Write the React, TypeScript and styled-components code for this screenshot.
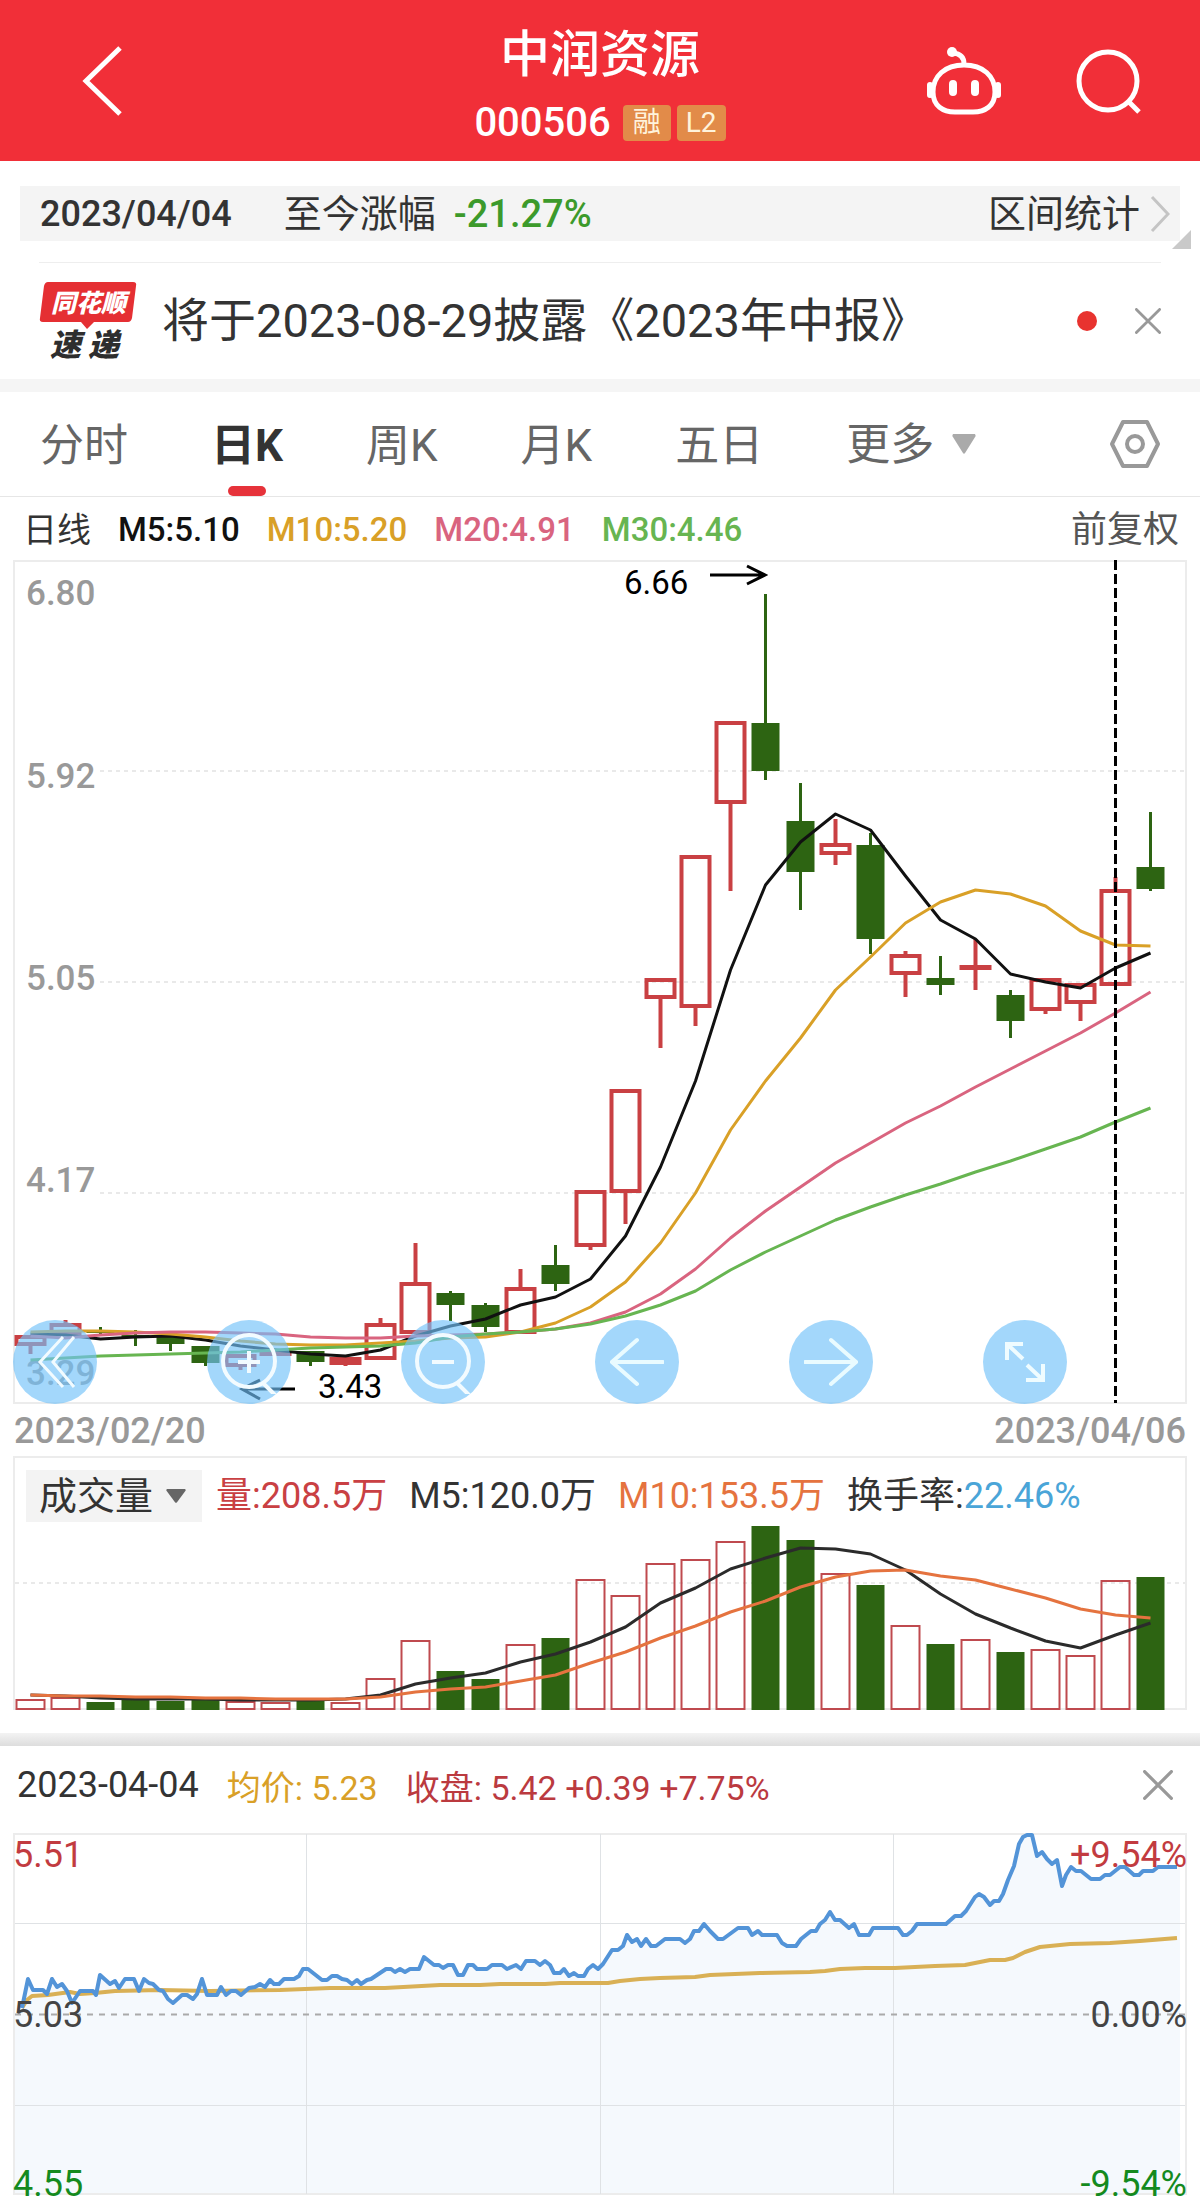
import React from "react";
import styled, { createGlobalStyle } from "styled-components";

const color = {
  brand: "#f12f38",
  ink: "#333333",
  muted: "#999999",
  rise: "#c94043",
  fall: "#2d6412",
  gold: "#d9a027",
  pink: "#d9647f",
  green: "#67b551",
  orange: "#e5733f",
  blue: "#4aa5d8",
  frame: "#ececec",
};

const fonts = `Roboto, "Noto Sans CJK SC", sans-serif`;

const GlobalStyle = createGlobalStyle`
  *, *::before, *::after { box-sizing: border-box; }
  body { margin: 0; background: #fff; color: ${color.ink}; font-family: ${fonts}; }
  button, select { font: inherit; color: inherit; border: 0; padding: 0; margin: 0; background: none; }
  h1, p { margin: 0; font-weight: inherit; }
  svg { display: block; flex: none; }
`;

const Page = styled.div`
  display: flex;
  flex-direction: column;
  padding-bottom: 3px;
`;

/* ---------- header ---------- */

const Header = styled.header`
  display: grid;
  grid-template-columns: 1fr auto 1fr;
  align-items: center;
  height: 161px;
  padding: 0 56px;
  background: ${color.brand};
  color: #fff;
`;

const HeaderTitle = styled.div`
  display: flex;
  flex-direction: column;
  align-items: center;
  gap: 8px;
  padding: 16px 0 0;
`;

const StockName = styled.h1`
  font-size: 50px;
  line-height: 60px;
  font-weight: 500;
`;

const CodeRow = styled.div`
  display: flex;
  align-items: center;
  gap: 6px;
  font-size: 40px;
  line-height: 60px;
  font-weight: 500;
`;

const Code = styled.span`
  margin-right: 6px;
`;

const Badge = styled.span`
  min-width: 48px;
  height: 36px;
  padding: 0 9px;
  border-radius: 4px;
  background: #e28b49;
  color: #fff3dc;
  font-size: 28px;
  line-height: 36px;
  font-weight: 400;
  text-align: center;
`;

const IconButton = styled.button`
  display: flex;
  align-items: center;
  justify-content: center;
  cursor: pointer;
`;

const BackButton = styled(IconButton)`
  justify-self: start;
  padding-left: 24px;
`;

const HeaderActions = styled.div`
  display: flex;
  justify-content: flex-end;
  align-items: center;
  gap: 70px;
`;

/* ---------- range bar and notice ---------- */

const RangeBar = styled.div`
  position: relative;
  display: flex;
  align-items: center;
  height: 55px;
  margin: 25px 20px 0;
  padding: 0 10px 0 20px;
  background: #f4f4f4;
  font-size: 38px;
  line-height: 50px;
`;

const RangeDate = styled.time`
  font-size: 36px;
  font-weight: 500;
  margin-right: 52px;
`;

const RangeValue = styled.span`
  margin-left: 18px;
  color: #3c9a2b;
  font-weight: 500;
`;

const RangeLink = styled.a`
  display: flex;
  align-items: center;
  gap: 10px;
  margin-left: auto;
  color: inherit;
  text-decoration: none;
`;

const Corner = styled.span`
  position: absolute;
  right: -11px;
  bottom: -8px;
  border-left: 19px solid transparent;
  border-bottom: 19px solid #c9c9c9;
`;

const Notice = styled.section`
  display: flex;
  align-items: center;
  height: 117px;
  margin: 21px 39px 0;
  border-top: 1px solid #eeeeee;
`;

const NoticeText = styled.p`
  flex: 1;
  margin-left: 25px;
  font-size: 47px;
  line-height: 60px;
`;

const UnreadDot = styled.span`
  width: 20px;
  height: 20px;
  margin-right: 38px;
  border-radius: 50%;
  background: #e8332f;
`;

const Band = styled.div`
  height: 13px;
  background: #f5f5f5;
`;

/* ---------- period tabs ---------- */

const Tabs = styled.nav`
  display: flex;
  align-items: stretch;
  justify-content: space-between;
  height: 105px;
  padding: 0 39px 0 40px;
  border-bottom: 1px solid #e6e6e6;
  color: #666;
  font-size: 44px;
`;

const TabList = styled.div`
  display: flex;
  align-items: stretch;
  gap: 83px;
`;

const Tab = styled.button<{ $active?: boolean }>`
  display: flex;
  align-items: center;
  justify-content: center;
  position: relative;
  padding-bottom: 4px;
  white-space: nowrap;
  font-weight: ${(p) => (p.$active ? 700 : 400)};
  color: ${(p) => (p.$active ? color.ink : "inherit")};
  cursor: pointer;

  &::after {
    content: "";
    display: ${(p) => (p.$active ? "block" : "none")};
    position: absolute;
    bottom: 0;
    width: 38px;
    height: 10px;
    border-radius: 5px;
    background: #e6323a;
  }
`;

const Picker = styled.label<{ $gap: number }>`
  display: flex;
  align-items: center;
  gap: ${(p) => p.$gap}px;
`;

const PickerSelect = styled.select`
  appearance: none;
  outline: none;
  cursor: pointer;
`;

const PeriodSelect = styled(PickerSelect)`
  padding-top: 2px;
`;

const Spacer = styled.span`
  flex: 1;
`;

/* ---------- charts ---------- */

const Legend = styled.div`
  display: flex;
  align-items: center;
  gap: 27px;
  height: 63px;
  padding: 2px 21px 0 23px;
  font-size: 34px;
  line-height: 48px;
`;

const Value = styled.span<{ $color: string }>`
  color: ${(p) => p.$color};
  font-weight: 500;
  font-size: 33px;
`;

const Adjust = styled.button`
  margin-left: auto;
  color: #555;
  font-size: 36px;
`;

const Plot = styled.div`
  position: relative;
  margin: 0 13px;
`;

const Drawing = styled.svg`
  width: 100%;
  height: auto;
  overflow: visible;
  font-family: ${fonts};
  font-size: 36px;
`;

const Controls = styled.div`
  position: absolute;
  left: 0;
  bottom: 0;
  display: flex;
  gap: 110px;
`;

const RoundButton = styled.button`
  display: flex;
  align-items: center;
  justify-content: center;
  width: 84px;
  height: 84px;
  border-radius: 50%;
  background: rgba(114, 194, 249, 0.65);
  cursor: pointer;
`;

const DateAxis = styled.div`
  display: flex;
  justify-content: space-between;
  align-items: center;
  height: 52px;
  padding: 2px 14px 0;
  color: ${color.muted};
  font-size: 36px;
  font-weight: 500;
`;

const VolumeBox = styled.section`
  margin: 0 13px;
  border: 2px solid ${color.frame};
  border-bottom: 0;
`;

const VolumeLegend = styled.div`
  display: flex;
  align-items: center;
  gap: 22px;
  height: 63px;
  padding: 12px 11px 0;
  font-size: 36px;
  line-height: 52px;
  font-weight: 400;
`;

const Chip = styled.div`
  height: 52px;
  margin-right: -8px;
  padding: 0 16px 0 13px;
  background: #f3f3f3;
  font-size: 38px;
  line-height: 52px;
`;

const Tint = styled.span<{ $color: string }>`
  color: ${(p) => p.$color};
`;

const Divider = styled.div`
  height: 13px;
  margin-top: 23px;
  background: linear-gradient(#f3f3f3, #dddddd);
`;

const DayHeader = styled.div`
  display: flex;
  align-items: center;
  gap: 28px;
  height: 78px;
  margin-bottom: 9px;
  padding: 0 27px 0 17px;
  font-size: 34px;
`;

const DayDate = styled.time`
  font-size: 36px;
`;

/* ---------- data, in units of the chart drawings ---------- */

type Candle = [top: number, bottom: number, high: number, low: number, up: boolean, volumeTop: number];

const candles: Candle[] = [
  [1337, 1344, 1337, 1354, true, 1699],
  [1325, 1334, 1320, 1334, true, 1697],
  [1330, 1333, 1327, 1335, false, 1702],
  [1335, 1338, 1330, 1346, false, 1700],
  [1336, 1344, 1336, 1351, false, 1701],
  [1346, 1363, 1346, 1366, false, 1700],
  [1356, 1365, 1356, 1370, true, 1701],
  [1353, 1354, 1353, 1354, true, 1702],
  [1351, 1362, 1351, 1366, false, 1701],
  [1359, 1363, 1355, 1366, true, 1702],
  [1325, 1358, 1318, 1358, true, 1678],
  [1284, 1332, 1243, 1332, true, 1640],
  [1293, 1305, 1291, 1321, false, 1671],
  [1305, 1327, 1303, 1332, false, 1679],
  [1289, 1332, 1269, 1332, true, 1644],
  [1265, 1284, 1245, 1291, false, 1638],
  [1192, 1245, 1192, 1250, true, 1579],
  [1091, 1191, 1091, 1224, true, 1595],
  [980, 997, 980, 1048, true, 1563],
  [857, 1006, 857, 1026, true, 1559],
  [723, 802, 723, 891, true, 1541],
  [723, 771, 594, 780, false, 1526],
  [821, 872, 783, 910, false, 1540],
  [845, 853, 819, 865, true, 1573],
  [845, 939, 833, 954, false, 1585],
  [956, 973, 951, 997, true, 1625],
  [978, 985, 956, 995, false, 1644],
  [967, 968, 939, 990, true, 1639],
  [995, 1021, 990, 1038, false, 1652],
  [980, 1009, 978, 1014, true, 1649],
  [985, 1002, 985, 1021, true, 1655],
  [891, 984, 877, 984, true, 1580],
  [867, 889, 812, 891, false, 1577],
];

const ma5 = [1334, 1335, 1339, 1337, 1336, 1340, 1346, 1350, 1354, 1356, 1350, 1336, 1326, 1319, 1305, 1297, 1279, 1236, 1167, 1081, 970, 885, 842, 814, 830, 876, 920, 939, 974, 982, 988, 968, 953];
const ma10 = [1332, 1331, 1331, 1332, 1334, 1337, 1341, 1344, 1345, 1345, 1343, 1341, 1338, 1337, 1332, 1323, 1307, 1282, 1243, 1193, 1130, 1081, 1038, 990, 957, 923, 902, 890, 894, 906, 931, 945, 946];
const ma20 = [1336, 1338, 1335, 1333, 1332, 1332, 1333, 1334, 1337, 1338, 1338, 1336, 1335, 1334, 1332, 1329, 1323, 1312, 1294, 1269, 1238, 1211, 1187, 1163, 1143, 1123, 1106, 1087, 1069, 1051, 1033, 1013, 992];
const ma30 = [1360, 1358, 1356, 1355, 1354, 1353, 1352, 1350, 1348, 1347, 1346, 1343, 1337, 1334, 1332, 1329, 1324, 1316, 1305, 1291, 1270, 1252, 1236, 1220, 1207, 1195, 1184, 1172, 1161, 1149, 1137, 1122, 1108];
const volume5 = [1695, 1696, 1698, 1699, 1699, 1699, 1700, 1700, 1700, 1699, 1695, 1684, 1678, 1673, 1662, 1654, 1642, 1627, 1603, 1588, 1569, 1558, 1548, 1549, 1554, 1570, 1594, 1614, 1628, 1641, 1648, 1635, 1623];
const volume10 = [1695, 1696, 1696, 1697, 1697, 1698, 1698, 1699, 1699, 1699, 1697, 1692, 1689, 1687, 1681, 1675, 1663, 1652, 1638, 1626, 1612, 1601, 1587, 1577, 1571, 1570, 1576, 1580, 1589, 1598, 1609, 1615, 1618];

const intraday =
  "22,2008 28,1979 33,1990 43,1990 47,1994 52,1979 57,1987 62,1984 67,1991 72,2003 80,1991 93,1991 96,1995 100,1975 110,1984 115,1981 119,1988 125,1979 134,1979 139,1991 144,1979 149,1983 153,1984 159,1990 163,1991 168,1999 173,2003 182,1995 187,1995 193,1999 197,1994 202,1979 207,1995 217,1995 221,1987 226,1995 231,1991 236,1991 241,1995 249,1988 255,1987 260,1984 265,1987 270,1980 274,1984 279,1984 284,1979 294,1979 299,1976 303,1969 308,1969 322,1980 327,1980 332,1976 337,1976 342,1979 347,1980 352,1984 357,1980 361,1984 367,1980 371,1979 386,1969 391,1969 395,1972 400,1969 405,1972 410,1969 419,1969 424,1957 434,1965 439,1965 443,1968 448,1965 453,1965 458,1975 463,1975 468,1965 473,1965 477,1969 487,1969 492,1965 502,1965 507,1969 516,1965 521,1969 526,1961 535,1961 540,1965 545,1961 550,1965 554,1973 560,1973 564,1969 569,1976 574,1973 578,1976 584,1976 588,1969 593,1965 598,1969 603,1964 612,1950 618,1950 623,1946 627,1935 632,1942 637,1939 641,1946 646,1939 651,1946 656,1946 665,1939 680,1939 685,1943 690,1939 694,1931 699,1931 704,1924 710,1931 718,1939 723,1939 738,1928 748,1928 752,1935 758,1931 762,1935 777,1935 782,1943 787,1946 796,1946 801,1939 811,1931 816,1931 820,1924 825,1920 830,1912 835,1920 840,1920 849,1928 854,1924 859,1935 869,1935 873,1928 898,1928 903,1935 907,1935 912,1931 917,1924 946,1924 955,1916 961,1916 966,1911 975,1897 979,1894 984,1897 990,1905 994,1901 999,1901 1003,1894 1008,1880 1014,1866 1019,1844 1023,1837 1027,1835 1032,1835 1037,1856 1042,1852 1047,1859 1052,1864 1057,1860 1062,1886 1066,1875 1071,1867 1076,1871 1081,1871 1091,1879 1100,1879 1105,1875 1110,1875 1120,1867 1125,1867 1134,1875 1139,1875 1143,1871 1153,1871 1158,1867 1177,1867";
const average =
  "22,2008 27,2000 32,1996 48,1995 70,1992 80,1994 95,1993 115,1991 160,1990 210,1991 280,1990 330,1988 385,1988 440,1985 480,1985 500,1984 545,1984 560,1983 608,1983 620,1981 640,1979 660,1978 695,1977 710,1975 760,1973 810,1972 825,1971 840,1969 865,1968 895,1968 935,1966 965,1965 980,1962 990,1960 1005,1960 1013,1958 1025,1952 1040,1947 1070,1944 1110,1943 1140,1941 1177,1938";

const candleX = (i: number) => 30.5 + 35 * i;
const toPoints = (ys: number[]) => ys.map((y, i) => `${candleX(i)},${y}`).join(" ");

const Line = ({ ys, stroke }: { ys: number[]; stroke: string }) => (
  <polyline points={toPoints(ys)} fill="none" stroke={stroke} strokeWidth="3" strokeLinejoin="round" />
);

const Caret = ({ w, h, fill }: { w: number; h: number; fill: string }) => (
  <svg width={w} height={h} viewBox="0 0 20 16" preserveAspectRatio="none" fill={fill}>
    <path d="M1 0H19Q20 1 19.500 2L11 15Q10 16.500 9 15L.5 2Q0 1 1 0Z" />
  </svg>
);

const Cross = ({ size }: { size: number }) => (
  <svg width={size} height={size} viewBox="0 0 28 28" stroke="#999" strokeWidth="3" strokeLinecap="round">
    <path d="M1.500 1.500l25 25M26.500 1.500l-25 25" />
  </svg>
);

function CandleChart() {
  return (
    <Plot>
      <Drawing viewBox="13 560 1174 844" role="img" aria-label="日K线图">
        <rect x="14" y="561" width="1172" height="842" fill="none" stroke={color.frame} strokeWidth="2" />
        {[771, 982, 1193].map((y) => (
          <line key={y} x1="100" x2="1185" y1={y} y2={y} stroke="#e9e9e9" strokeWidth="2" strokeDasharray="4 4" />
        ))}
        <g fill={color.muted} fontWeight="500" fontSize="35">
          <text x="26" y="605">6.80</text>
          <text x="26" y="788">5.92</text>
          <text x="26" y="990">5.05</text>
          <text x="26" y="1192">4.17</text>
          <text x="26" y="1385">3.29</text>
        </g>
        {candles.map(([top, bottom, high, low, up], i) => {
          const x = candleX(i);
          return up ? (
            <g key={i} stroke={color.rise} strokeWidth="4" fill="none">
              <rect x={x - 14} y={top} width="28" height={bottom - top} />
              <path d={`M${x} ${high}V${top}M${x} ${bottom}V${low}`} />
            </g>
          ) : (
            <g key={i} fill={color.fall}>
              <rect x={x - 14} y={top} width="28" height={bottom - top} />
              <rect x={x - 1.5} y={high} width="3" height={low - high} />
            </g>
          );
        })}
        <Line ys={ma5} stroke="#111" />
        <Line ys={ma10} stroke={color.gold} />
        <Line ys={ma20} stroke={color.pink} />
        <Line ys={ma30} stroke={color.green} />
        <path d="M1115.500 560V1403" stroke="#000" strokeWidth="3" strokeDasharray="10 4" />
        <g fill="none" stroke="#000" strokeWidth="3">
          <path d="M710 575H765M747 566L765 575L747 584" />
          <path d="M295 1389H242M260 1380L242 1389L260 1399" />
        </g>
        <g fill="#000" fontSize="33">
          <text x="624" y="594">6.66</text>
          <text x="318" y="1398">3.43</text>
        </g>
      </Drawing>
      <Controls>
        <RoundButton aria-label="最早">
          <svg width="44" height="60" viewBox="0 0 44 60" fill="none" stroke="#f2fbff" strokeWidth="3">
            <path d="M30 5L7 30L30 55M41 5L20 30L41 55" />
          </svg>
        </RoundButton>
        <RoundButton aria-label="放大">
          <svg width="64" height="64" viewBox="0 0 64 64" fill="none" stroke="#f2fbff" strokeWidth="4">
            <circle cx="32" cy="31" r="26" />
            <path d="M46 53l12 12M32 21v22M21 32h22" />
          </svg>
        </RoundButton>
        <RoundButton aria-label="缩小">
          <svg width="64" height="64" viewBox="0 0 64 64" fill="none" stroke="#f2fbff" strokeWidth="4">
            <circle cx="32" cy="31" r="26" />
            <path d="M46 53l12 12M21 32h22" />
          </svg>
        </RoundButton>
        <RoundButton aria-label="左移">
          <svg width="54" height="50" viewBox="0 0 54 50" fill="none" stroke="#e9fbff" strokeWidth="4" strokeLinecap="round">
            <path d="M53 25H3M27 3L2 25L27 47" />
          </svg>
        </RoundButton>
        <RoundButton aria-label="右移">
          <svg width="54" height="50" viewBox="0 0 54 50" fill="none" stroke="#e9fbff" strokeWidth="4" strokeLinecap="round">
            <path d="M1 25H51M27 3L52 25L27 47" />
          </svg>
        </RoundButton>
        <RoundButton aria-label="全屏">
          <svg width="42" height="42" viewBox="0 0 42 42" fill="none" stroke="#effcff" strokeWidth="4">
            <path d="M19 3H3V19M3 3L19 18M39 23V39H22M39 39L23 24" />
          </svg>
        </RoundButton>
      </Controls>
    </Plot>
  );
}

function VolumeChart() {
  return (
    <Drawing viewBox="15 1521 1170 189" role="img" aria-label="成交量图">
      <line x1="15" x2="1185" y1="1583" y2="1583" stroke="#e9e9e9" strokeWidth="2" strokeDasharray="4 4" />
      <line x1="15" x2="1185" y1="1709" y2="1709" stroke={color.frame} strokeWidth="2" />
      {candles.map(([, , , , up, top], i) =>
        up ? (
          <rect key={i} x={candleX(i) - 14} y={top + 1} width="28" height={1708 - top} fill="none" stroke="#bf4a4f" strokeWidth="2" />
        ) : (
          <rect key={i} x={candleX(i) - 14} y={top} width="28" height={1710 - top} fill={color.fall} />
        ),
      )}
      <Line ys={volume5} stroke="#2b2b2b" />
      <Line ys={volume10} stroke={color.orange} />
    </Drawing>
  );
}

function IntradayChart() {
  return (
    <Plot>
      <Drawing viewBox="13 1833 1174 363" role="img" aria-label="分时图">
        <polygon points={`15,2194 15,2014 ${intraday} 1180,1867 1180,2194`} fill="#f5f9fd" />
        <rect x="14" y="1834" width="1172" height="360" fill="none" stroke={color.frame} strokeWidth="2" />
        <path d="M15 1923.500H1185M15 2105.500H1185M306.500 1834V2194M600.500 1834V2194M893.500 1834V2194" stroke="#dfe2e5" fill="none" />
        <path d="M15 2014.500H1185" stroke="#aaa" strokeWidth="2" strokeDasharray="6 6" />
        <polyline points={average} fill="none" stroke="#d9b055" strokeWidth="4" strokeLinejoin="round" />
        <polyline points={intraday} fill="none" stroke="#5394d8" strokeWidth="4" strokeLinejoin="round" />
        <text x="13" y="1867" fill="#c23b40">5.51</text>
        <text x="13" y="2027" fill="#444">5.03</text>
        <text x="13" y="2196" fill="#148a1e">4.55</text>
        <g textAnchor="end">
          <text x="1187" y="1867" fill="#c23b40">+9.54%</text>
          <text x="1187" y="2027" fill="#444">0.00%</text>
          <text x="1187" y="2196" fill="#148a1e">-9.54%</text>
        </g>
      </Drawing>
    </Plot>
  );
}

export default function App() {
  return (
    <Page>
      <GlobalStyle />
      <Header>
        <BackButton aria-label="返回">
          <svg width="44" height="72" viewBox="0 0 44 72" fill="none" stroke="#fff" strokeWidth="5">
            <path d="M40 3L6 36L40 69" />
          </svg>
        </BackButton>
        <HeaderTitle>
          <StockName>中润资源</StockName>
          <CodeRow>
            <Code>000506</Code>
            <Badge>融</Badge>
            <Badge>L2</Badge>
          </CodeRow>
        </HeaderTitle>
        <HeaderActions>
          <IconButton aria-label="智能助手">
            <svg width="76" height="72" viewBox="0 0 76 72" fill="none" stroke="#fff" strokeWidth="5" strokeLinecap="round">
              <path d="M38 20C57 20 69 31 69 47C69 61 59 67 47 67H29C17 67 7 61 7 47C7 31 19 20 38 20ZM38 19Q38 9 27 8" />
              <circle cx="26" cy="7" r="5" fill="#fff" stroke="none" />
              <path d="M4 40v10M72 40v10" strokeWidth="6" />
              <path d="M27 39v8M49 39v8" strokeWidth="8" />
            </svg>
          </IconButton>
          <IconButton aria-label="搜索">
            <svg width="72" height="72" viewBox="0 0 72 72" fill="none" stroke="#fff" strokeWidth="5">
              <circle cx="36" cy="36" r="29" />
              <path d="M56 56L67 67" />
            </svg>
          </IconButton>
        </HeaderActions>
      </Header>

      <RangeBar>
        <RangeDate>2023/04/04</RangeDate>
        <span>至今涨幅</span>
        <RangeValue>-21.27%</RangeValue>
        <RangeLink href="#stats">
          区间统计
          <svg width="20" height="38" viewBox="0 0 20 38" fill="none" stroke="#c4c4c4" strokeWidth="3">
            <path d="M2 2L18 19L2 36" />
          </svg>
        </RangeLink>
        <Corner />
      </RangeBar>

      <Notice>
        <svg width="98" height="92" viewBox="0 -6 98 92" fontFamily={fonts} fontWeight="900" fontStyle="italic">
          <path d="M9 1H94Q98 1 97 5L93 37Q92 41 89 41H55L48 48L42 41H4Q0 41 1 37L5 5Q6 1 9 1Z" fill="#e52f33" />
          <text x="12" y="31" fontSize="25" fill="#fff">同花顺</text>
          <text x="11" y="75" fontSize="31" fill="#2e2e2e">速</text>
          <text x="49" y="75" fontSize="31" fill="#2e2e2e">递</text>
        </svg>
        <NoticeText>将于2023-08-29披露《2023年中报》</NoticeText>
        <UnreadDot />
        <IconButton aria-label="关闭通知">
          <Cross size={26} />
        </IconButton>
      </Notice>
      <Band />

      <Tabs>
        <TabList>
          <Tab>分时</Tab>
          <Tab $active>日K</Tab>
          <Tab>周K</Tab>
          <Tab>月K</Tab>
          <Tab>五日</Tab>
          <Picker $gap={18}>
            <PeriodSelect aria-label="更多周期">
              <option>更多</option>
            </PeriodSelect>
            <Caret w={24} h={20} fill="#aaa" />
          </Picker>
        </TabList>
        <IconButton aria-label="图表设置">
          <svg width="52" height="50" viewBox="0 0 52 50" fill="none" stroke="#999" strokeWidth="4" strokeLinejoin="round">
            <path d="M14 3H38L49 25L38 47H14L3 25Z" />
            <circle cx="26" cy="25" r="8" />
          </svg>
        </IconButton>
      </Tabs>

      <Legend>
        <span>日线</span>
        <Value $color="#111">M5:5.10</Value>
        <Value $color={color.gold}>M10:5.20</Value>
        <Value $color={color.pink}>M20:4.91</Value>
        <Value $color={color.green}>M30:4.46</Value>
        <Adjust>前复权</Adjust>
      </Legend>
      <CandleChart />
      <DateAxis>
        <time>2023/02/20</time>
        <time>2023/04/06</time>
      </DateAxis>

      <VolumeBox>
        <VolumeLegend>
          <Chip>
            <Picker $gap={12}>
              <PickerSelect aria-label="副图指标">
                <option>成交量</option>
              </PickerSelect>
              <Caret w={20} h={14} fill="#666" />
            </Picker>
          </Chip>
          <Tint $color={color.rise}>量:208.5万</Tint>
          <span>M5:120.0万</span>
          <Tint $color={color.orange}>M10:153.5万</Tint>
          <span>
            换手率:<Tint $color={color.blue}>22.46%</Tint>
          </span>
        </VolumeLegend>
        <VolumeChart />
      </VolumeBox>

      <Divider />
      <DayHeader>
        <DayDate>2023-04-04</DayDate>
        <Tint $color={color.gold}>均价: 5.23</Tint>
        <Tint $color="#bb3a3f">收盘: 5.42 +0.39 +7.75%</Tint>
        <Spacer />
        <IconButton aria-label="关闭分时">
          <Cross size={30} />
        </IconButton>
      </DayHeader>
      <IntradayChart />
    </Page>
  );
}
